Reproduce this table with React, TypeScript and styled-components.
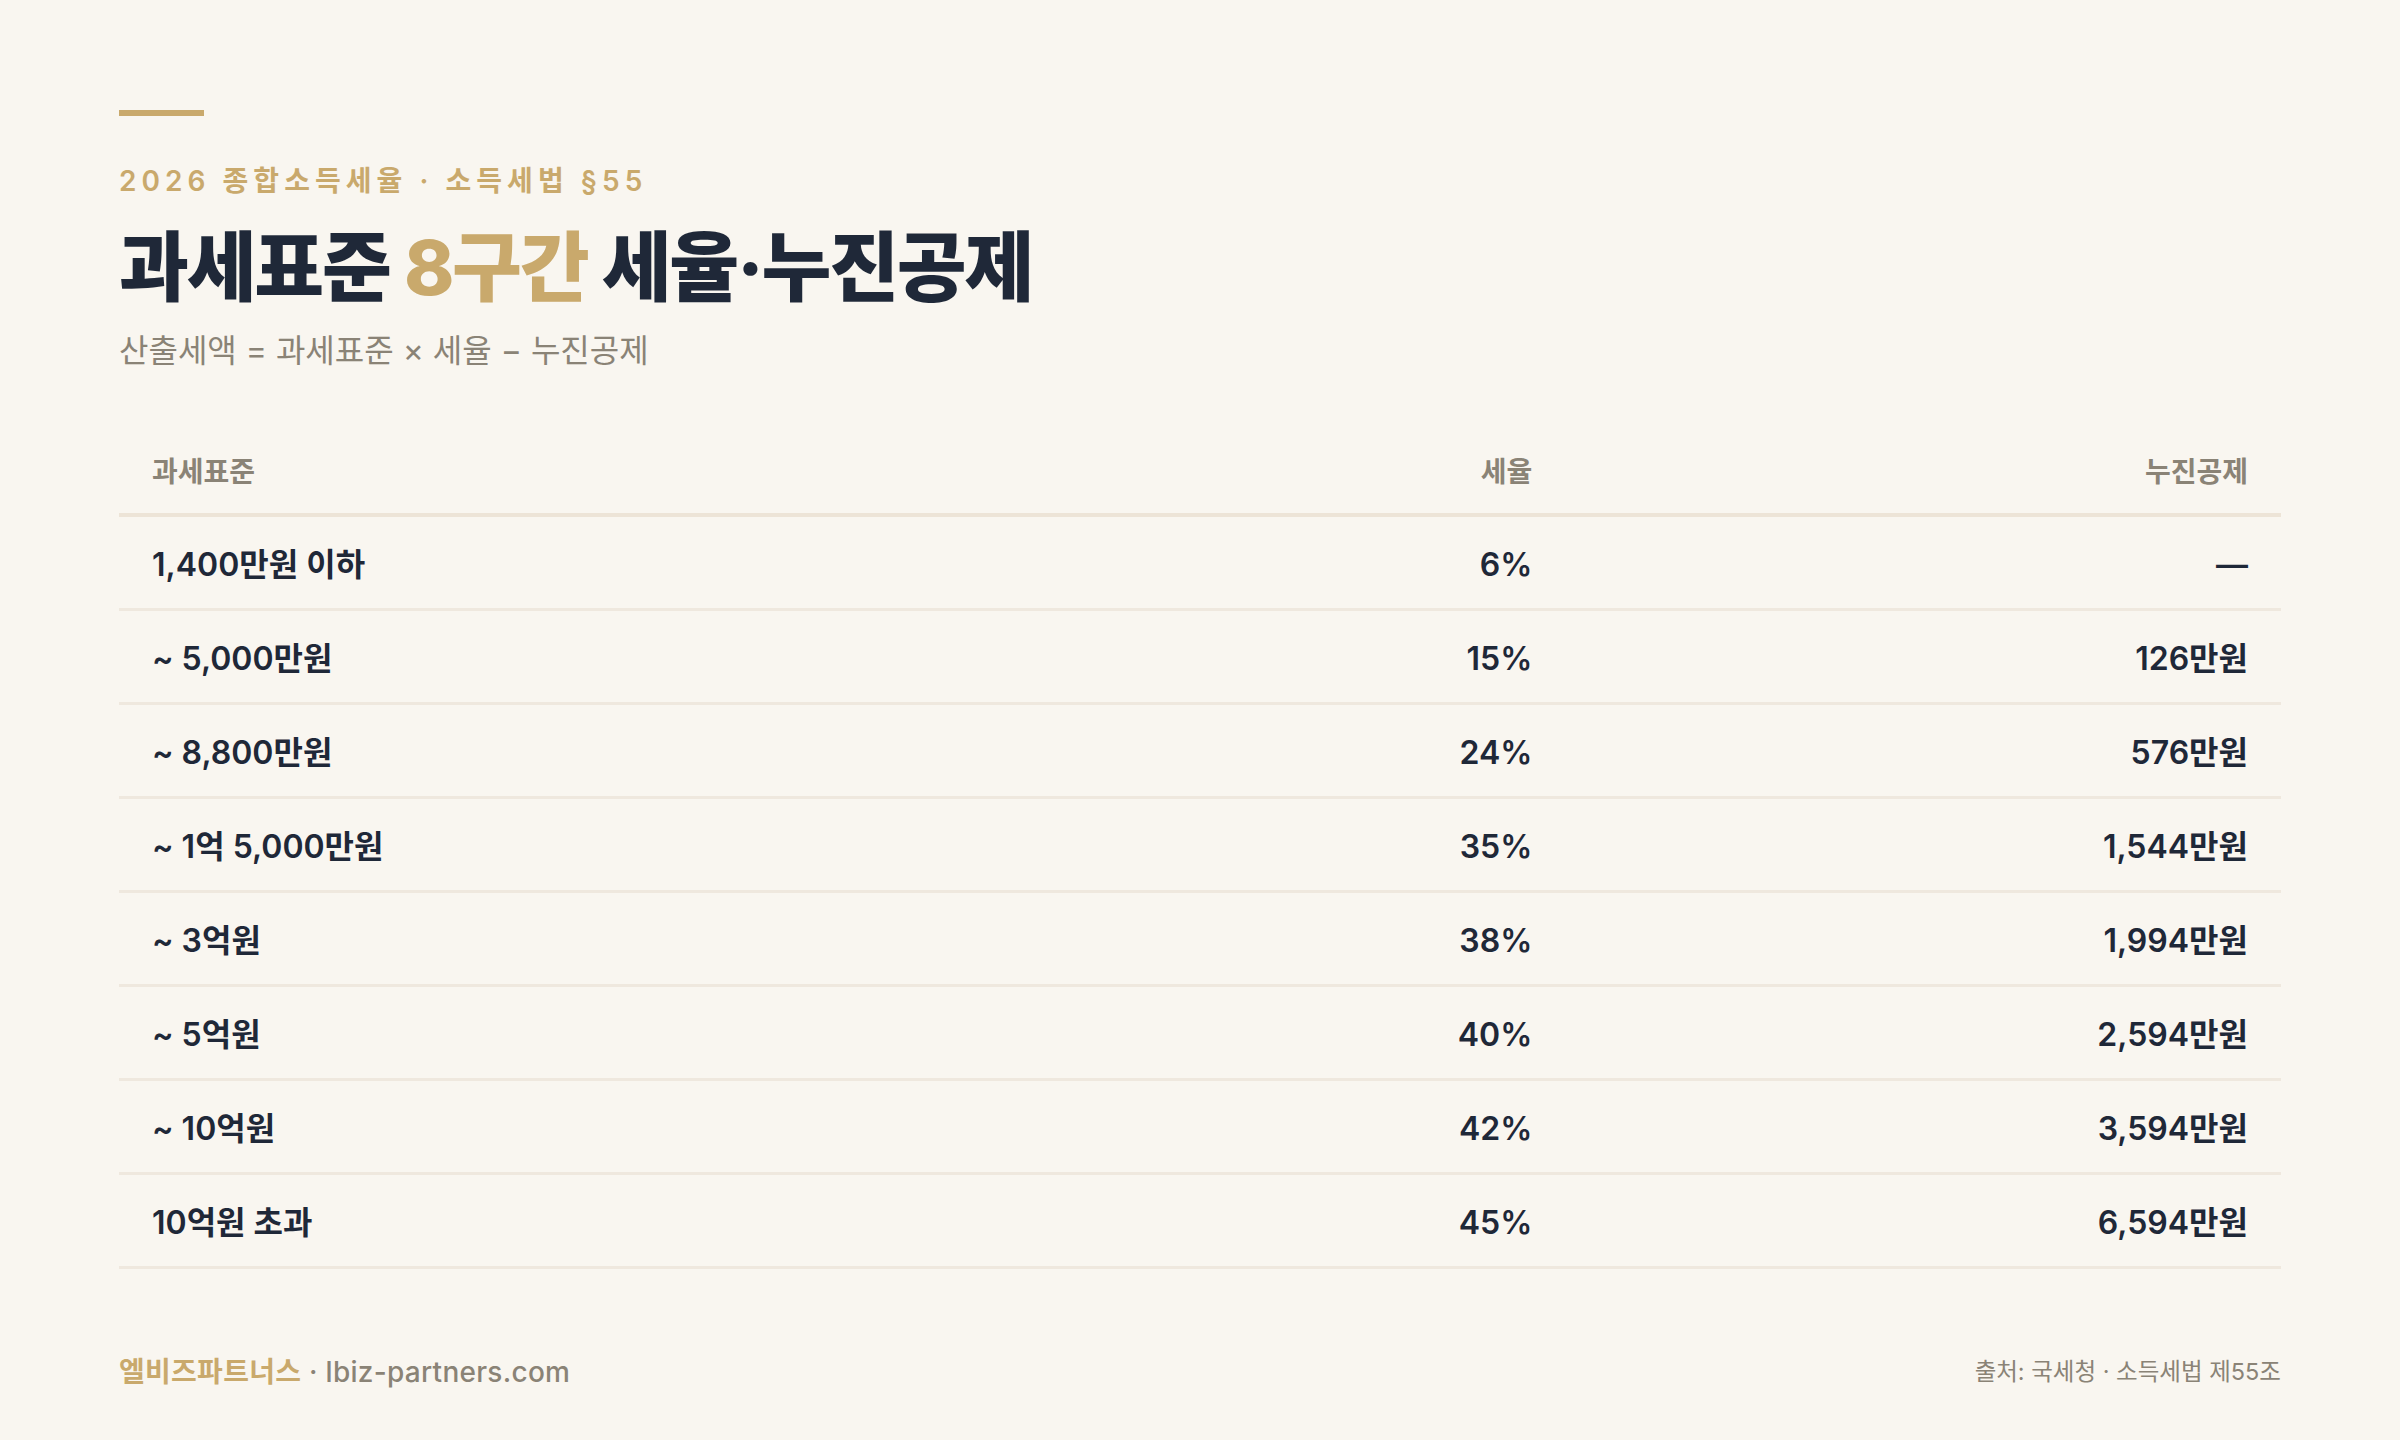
import React from "react";
import styled, { createGlobalStyle } from "styled-components";

const Global = createGlobalStyle`
  html, body { margin: 0; padding: 0; background: #f9f6f0; }
  body { font-family: Inter, "Noto Sans CJK KR", sans-serif; }
`;

const Page = styled.div`
  width: 2400px;
  height: 1440px;
  box-sizing: border-box;
  padding: 110px 119px 50px;
  display: flex;
  flex-direction: column;
  background: #f9f6f0;
  color: #1f2838;
`;

const Accent = styled.div`
  width: 85px;
  height: 6px;
  background: #c9a96c;
`;

const Eyebrow = styled.div`
  margin-top: 47px;
  font-size: 28px;
  line-height: 36px;
  font-weight: 600;
  letter-spacing: 0.18em;
  color: #c9a96c;
`;

const Title = styled.h1`
  margin: 22px 0 0;
  font-size: 76px;
  line-height: 92px;
  font-weight: 800;
  letter-spacing: -0.03em;
  color: #1f2838;
`;

const Gold = styled.span`
  color: #c9a96c;
`;

const Subtitle = styled.div`
  margin-top: 18px;
  font-size: 32px;
  line-height: 40px;
  font-weight: 400;
  color: #8a8376;
`;

const Table = styled.div`
  margin-top: 55px;
  display: flex;
  flex-direction: column;
`;

const Row = styled.div<{ $head?: boolean }>`
  box-sizing: border-box;
  display: grid;
  grid-template-columns: 1fr 1fr 1fr;
  align-items: center;
  height: ${(p) => (p.$head ? "91px" : "94px")};
  padding: 5px 33px 0;
  border-bottom: ${(p) => (p.$head ? "4px solid #ede4d7" : "3px solid #efe8de")};
  font-size: ${(p) => (p.$head ? "28px" : "32px")};
  line-height: 1.3;
  font-weight: 600;
  color: ${(p) => (p.$head ? "#8a8376" : "#1f2838")};
`;

const Cell = styled.div<{ $align?: "left" | "right" }>`
  text-align: ${(p) => p.$align ?? "left"};
`;

const MidCell = styled(Cell)`
  padding-right: 17px;
`;

const Footer = styled.div`
  margin-top: auto;
  display: flex;
  justify-content: space-between;
  align-items: center;
`;

const Brand = styled.div`
  font-size: 28px;
  font-weight: 500;
  color: #8a8376;
  letter-spacing: 0.01em;
`;

const BrandName = styled.span`
  color: #c9a96c;
  font-weight: 700;
`;

const Source = styled.div`
  font-size: 23.5px;
  color: #8a8376;
`;

const rows = [
  ["1,400만원 이하", "6%", "—"],
  ["~ 5,000만원", "15%", "126만원"],
  ["~ 8,800만원", "24%", "576만원"],
  ["~ 1억 5,000만원", "35%", "1,544만원"],
  ["~ 3억원", "38%", "1,994만원"],
  ["~ 5억원", "40%", "2,594만원"],
  ["~ 10억원", "42%", "3,594만원"],
  ["10억원 초과", "45%", "6,594만원"],
];

export default function App() {
  return (
    <>
      <Global />
      <Page>
        <Accent />
        <Eyebrow>2026 종합소득세율 · 소득세법 §55</Eyebrow>
        <Title>
          과세표준 <Gold>8구간</Gold> 세율·누진공제
        </Title>
        <Subtitle>산출세액 = 과세표준 × 세율 − 누진공제</Subtitle>
        <Table>
          <Row $head>
            <Cell>과세표준</Cell>
            <MidCell $align="right">세율</MidCell>
            <Cell $align="right">누진공제</Cell>
          </Row>
          {rows.map((r) => (
            <Row key={r[0]}>
              <Cell>{r[0]}</Cell>
              <MidCell $align="right">{r[1]}</MidCell>
              <Cell $align="right">{r[2]}</Cell>
            </Row>
          ))}
        </Table>
        <Footer>
          <Brand>
            <BrandName>엘비즈파트너스</BrandName> · lbiz-partners.com
          </Brand>
          <Source>출처: 국세청 · 소득세법 제55조</Source>
        </Footer>
      </Page>
    </>
  );
}
